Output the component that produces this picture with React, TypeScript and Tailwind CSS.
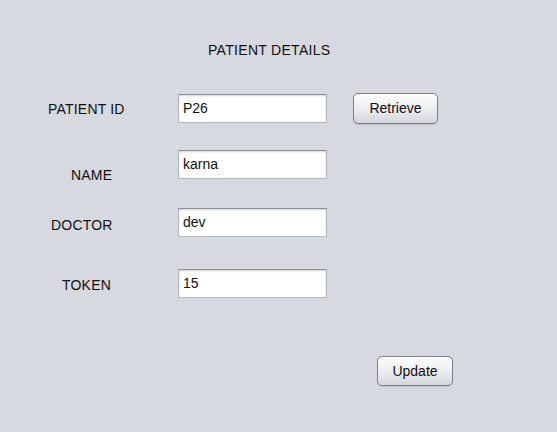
import React from 'react';

const fieldClass =
  'w-[149px] h-[29px] bg-white border border-[#b3b7be] border-t-[#8d929a] shadow-[inset_0_1px_2px_rgba(0,0,0,0.18)] pl-[4px] flex items-center leading-[17px]';

const buttonClass =
  'rounded-[5px] border border-[#7d828a] bg-gradient-to-b from-[#fdfdfe] via-[#eceef1] to-[#d3d6dc] shadow-[inset_0_1px_0_#ffffff,0_1px_1px_rgba(0,0,0,0.12)] flex items-center justify-center leading-[17px] text-[#111]';

function Field({ value }: { value: string }) {
  return <div className={fieldClass}>{value}</div>;
}

export default function App() {
  return (
    <div
      className="w-[557px] h-[432px] bg-[#d6d9df] text-[14px] text-[#111] overflow-hidden"
      style={{ fontFamily: '"Liberation Sans", Arial, sans-serif' }}
    >
      {/* Title */}
      <div className="pt-[42px] pl-[208px] leading-[17px] tracking-[0.3px]">PATIENT DETAILS</div>

      {/* Patient ID */}
      <div className="mt-[35px] flex items-start h-[29px]">
        <div className="w-[178px] pl-[48px] mt-[7px] leading-[17px] tracking-[0.2px]">PATIENT ID</div>
        <Field value="P26" />
        <button className={`${buttonClass} ml-[26px] -mt-[1px] w-[85px] h-[31px]`}>Retrieve</button>
      </div>

      {/* Name */}
      <div className="mt-[27px] flex items-start h-[29px]">
        <div className="w-[178px] pl-[71px] mt-[17px] leading-[17px] tracking-[0.2px]">NAME</div>
        <Field value="karna" />
      </div>

      {/* Doctor */}
      <div className="mt-[29px] flex items-start h-[29px]">
        <div className="w-[178px] pl-[51px] mt-[9px] leading-[17px] tracking-[0.2px]">DOCTOR</div>
        <Field value="dev" />
      </div>

      {/* Token */}
      <div className="mt-[32px] flex items-start h-[29px]">
        <div className="w-[178px] pl-[62px] mt-[8px] leading-[17px] tracking-[0.2px]">TOKEN</div>
        <Field value="15" />
      </div>

      {/* Update */}
      <div className="mt-[58px] pl-[377px]">
        <button className={`${buttonClass} w-[76px] h-[30px]`}>Update</button>
      </div>
    </div>
  );
}
